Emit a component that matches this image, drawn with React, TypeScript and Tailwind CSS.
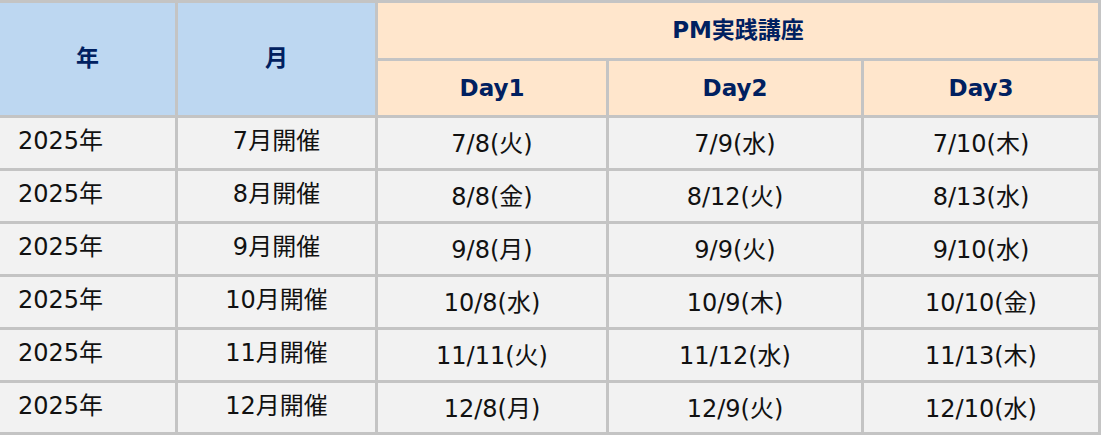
import React from 'react'

type Row = {
  year: string
  month: string
  days: [string, string, string]
  h: string
}

const rows: Row[] = [
  { year: '2025年', month: '7月開催', days: ['7/8(火)', '7/9(水)', '7/10(木)'], h: 'h-[50px]' },
  { year: '2025年', month: '8月開催', days: ['8/8(金)', '8/12(火)', '8/13(水)'], h: 'h-[50px]' },
  { year: '2025年', month: '9月開催', days: ['9/8(月)', '9/9(火)', '9/10(水)'], h: 'h-[50px]' },
  { year: '2025年', month: '10月開催', days: ['10/8(水)', '10/9(木)', '10/10(金)'], h: 'h-[50px]' },
  { year: '2025年', month: '11月開催', days: ['11/11(火)', '11/12(水)', '11/13(木)'], h: 'h-[50px]' },
  { year: '2025年', month: '12月開催', days: ['12/8(月)', '12/9(火)', '12/10(水)'], h: 'h-[49px]' }
]

const font = "font-['DejaVu_Sans','Noto_Sans_CJK_JP',sans-serif]"

export default function App() {
  return (
    <div className={`w-[1102px] h-[438px] bg-white ${font}`}>
      <div className="w-[1101px] bg-[#c4c4c4] pt-[3px] pr-[3px] pb-[3px] grid grid-cols-[175px_197px_228px_252px_234px] gap-[3px]">
        {/* header */}
        <div className="row-span-2 bg-[#bdd7f1] flex items-center justify-center pb-[2px] text-[23px] font-bold text-[#002060]">
          年
        </div>
        <div className="row-span-2 bg-[#bdd7f1] flex items-center justify-center pb-[2px] text-[23px] font-bold text-[#002060]">
          月
        </div>
        <div className="col-span-3 h-[55px] bg-[#ffe6cc] flex items-center justify-center text-[23px] font-bold text-[#002060]">
          PM実践講座
        </div>
        {['Day1', 'Day2', 'Day3'].map((d) => (
          <div
            key={d}
            className="h-[54px] bg-[#ffe6cc] flex items-center justify-center text-[23px] font-bold text-[#002060]"
          >
            {d}
          </div>
        ))}

        {/* body */}
        {rows.map((r, i) => (
          <React.Fragment key={i}>
            <div className={`${r.h} bg-[#f2f2f2] flex items-center pl-[18px] pb-[4px] text-[24px] text-[#111]`}>
              {r.year}
            </div>
            <div className={`${r.h} bg-[#f2f2f2] flex items-center justify-center pb-[4px] text-[24px] text-[#111]`}>
              {r.month}
            </div>
            {r.days.map((d, j) => (
              <div
                key={j}
                className={`${r.h} bg-[#f2f2f2] flex items-center justify-center pt-[2px] text-[24px] text-[#111]`}
              >
                {d}
              </div>
            ))}
          </React.Fragment>
        ))}
      </div>
    </div>
  )
}
